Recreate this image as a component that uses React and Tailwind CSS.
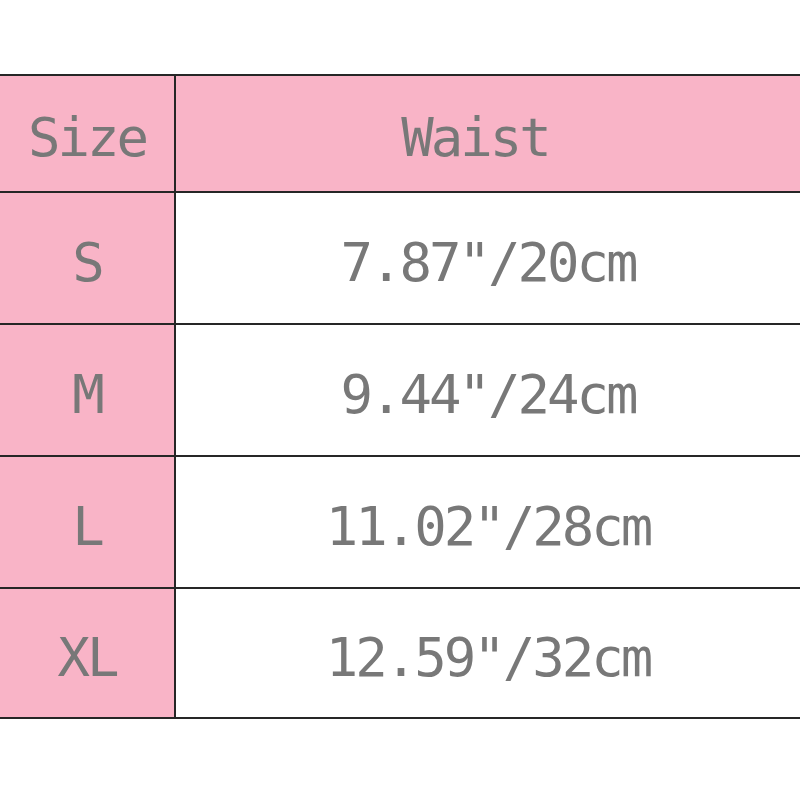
const rows = [
  { size: 'S', waist: '7.87"/20cm' },
  { size: 'M', waist: '9.44"/24cm' },
  { size: 'L', waist: '11.02"/28cm' },
  { size: 'XL', waist: '12.59"/32cm' },
];

const font = { fontFamily: '"DejaVu Sans Mono", "Liberation Mono", monospace' };

export default function App() {
  return (
    <div className="w-[800px] h-[800px] bg-white" style={font}>
      <div className="pt-[74px]">
        <div className="border-y-2 border-[#262626] text-[54px] tracking-[-3px] text-[#787878]">
          <div className="flex h-[117px] border-b-2 border-[#262626] bg-[#f9b4c7]">
            <div className="w-[176px] border-r-2 border-[#262626] flex items-center justify-center pt-[8px]">
              Size
            </div>
            <div className="flex-1 flex items-center justify-center pt-[8px] pr-[26px]">
              Waist
            </div>
          </div>
          {rows.map((r, i) => (
            <div
              key={r.size}
              className={`flex ${i < rows.length - 1 ? 'h-[132px] border-b-2 border-[#262626]' : 'h-[128px]'}`}
            >
              <div className="w-[176px] bg-[#f9b4c7] border-r-2 border-[#262626] flex items-center justify-center pt-[8px]">
                {r.size}
              </div>
              <div className="flex-1 flex items-center justify-center pt-[8px]">
                {r.waist}
              </div>
            </div>
          ))}
        </div>
      </div>
    </div>
  );
}
